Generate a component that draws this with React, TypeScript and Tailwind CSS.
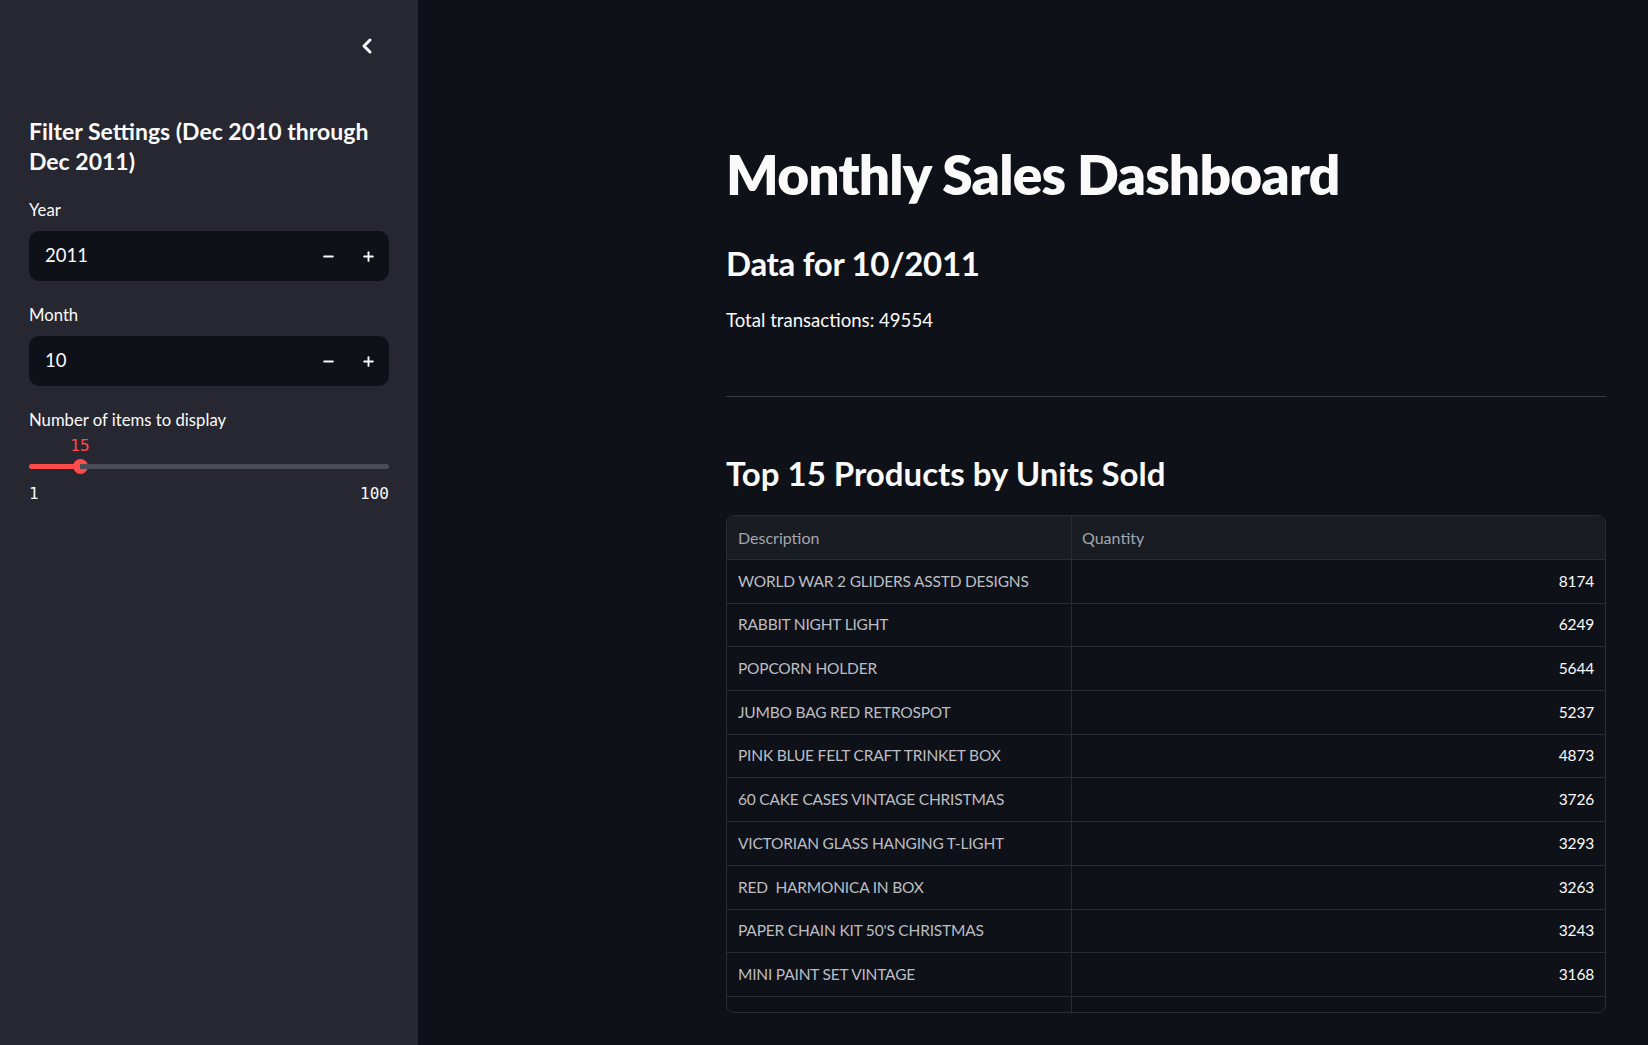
import React from 'react';
import { ChevronLeft, Minus, Plus } from 'lucide-react';

const products: { description: string; quantity: number }[] = [
  { description: 'WORLD WAR 2 GLIDERS ASSTD DESIGNS', quantity: 8174 },
  { description: 'RABBIT NIGHT LIGHT', quantity: 6249 },
  { description: 'POPCORN HOLDER', quantity: 5644 },
  { description: 'JUMBO BAG RED RETROSPOT', quantity: 5237 },
  { description: 'PINK BLUE FELT CRAFT TRINKET BOX', quantity: 4873 },
  { description: '60 CAKE CASES VINTAGE CHRISTMAS', quantity: 3726 },
  { description: 'VICTORIAN GLASS HANGING T-LIGHT', quantity: 3293 },
  { description: 'RED  HARMONICA IN BOX', quantity: 3263 },
  { description: "PAPER CHAIN KIT 50'S CHRISTMAS", quantity: 3243 },
  { description: 'MINI PAINT SET VINTAGE', quantity: 3168 },
];

const NumberInput: React.FC<{ label: string; value: string }> = ({ label, value }) => (
  <div>
    <div className="mt-[23px] h-[22px] text-[16.7px] leading-[22px] text-[#fafafa]">{label}</div>
    <div className="mt-[10px] flex h-[50px] items-center rounded-[10px] bg-[#0e1117] pl-[16px] pr-[1px]">
      <span className="flex-1 text-[18.5px] text-[#fafafa]">{value}</span>
      <button className="flex h-[40px] w-[40px] items-center justify-center text-[#fafafa]">
        <Minus size={15} strokeWidth={3} />
      </button>
      <button className="flex h-[40px] w-[40px] items-center justify-center text-[#fafafa]">
        <Plus size={15} strokeWidth={3} />
      </button>
    </div>
  </div>
);

const Slider: React.FC<{ label: string; value: number; min: number; max: number }> = ({ label, value, min, max }) => {
  const pct = (value - min) / (max - min);
  // thumb centre along the 360px track
  const filled = Math.round(pct * 360);
  return (
    <div>
      <div className="mt-[23px] h-[22px] text-[16.7px] leading-[22px] text-[#fafafa]">{label}</div>
      <div className="mt-[5px] h-[20px] font-['DejaVu_Sans_Mono',monospace] text-[16px] leading-[20px] text-[#ff4b4b]">
        <span className="inline-block w-[40px] text-center" style={{ marginLeft: filled - 20 }}>
          {value}
        </span>
      </div>
      <div className="mt-[3px] flex h-[15px] items-center">
        <div className="h-[5px] rounded-l-full bg-[#ff4b4b]" style={{ width: filled }} />
        <div className="-mx-[7.5px] h-[15px] w-[15px] shrink-0 rounded-full bg-[#ff4b4b]" />
        <div className="h-[5px] flex-1 rounded-r-full bg-[#4a4c56]" />
      </div>
      <div className="mt-[10px] flex justify-between font-['DejaVu_Sans_Mono',monospace] text-[16px] leading-[20px] text-[#fafafa]">
        <span>{min}</span>
        <span>{max}</span>
      </div>
    </div>
  );
};

const App: React.FC = () => {
  return (
    <div className="flex h-[1045px] w-[1648px] overflow-hidden font-['Lato','Noto_Sans',sans-serif] text-[#fafafa]">
      <aside className="flex w-[418px] shrink-0 flex-col bg-[#262730] px-[29px]">
        <div className="mt-[34px] flex h-[22px] justify-end pr-[10px]">
          <ChevronLeft size={24} strokeWidth={3} className="text-[#fafafa]" />
        </div>
        <h2 className="mt-[60px] text-[23px] font-bold leading-[30px] text-[#fafafa]">
          Filter Settings (Dec 2010 through Dec 2011)
        </h2>
        <NumberInput label="Year" value="2011" />
        <NumberInput label="Month" value="10" />
        <Slider label="Number of items to display" value={15} min={1} max={100} />
      </aside>

      <main className="flex-1 bg-[#0e1117] pl-[308px]">
        <div className="w-[880px]">
          <h1 className="mt-[141px] text-[55px] font-extrabold leading-[66px] tracking-[-0.8px]">Monthly Sales Dashboard</h1>
          <h3 className="mt-[35px] text-[33px] font-bold leading-[42px] tracking-[-0.3px]">Data for 10/2011</h3>
          <p className="mt-[21px] text-[18.6px] leading-[30px]">Total transactions: 49554</p>
          <hr className="mt-[61px] border-t border-[#393b41]" />
          <h3 className="mt-[55px] text-[33px] font-bold leading-[42px]">Top 15 Products by Units Sold</h3>

          <div className="mt-[21px] h-[498px] overflow-hidden rounded-[8px] border border-[#2a2c33] text-[15.5px] tracking-[-0.2px]">
            <div className="grid h-[44px] grid-cols-[345px_1fr] border-b border-[#2a2c33] bg-[#1a1c24] text-[16px] tracking-normal text-[#a3a6ae]">
              <div className="flex items-center border-r border-[#2a2c33] pl-[11px]">Description</div>
              <div className="flex items-center pl-[10px]">Quantity</div>
            </div>
            {products.map((p) => (
              <div key={p.description} className="grid h-[43.7px] grid-cols-[345px_1fr] border-b border-[#2a2c33]">
                <div className="flex items-center whitespace-pre border-r border-[#2a2c33] pl-[11px] text-[#bcbec4]">
                  {p.description}
                </div>
                <div className="flex items-center justify-end pr-[11px] text-[#fafafa]">{p.quantity}</div>
              </div>
            ))}
            <div className="grid h-[44px] grid-cols-[345px_1fr]">
              <div className="border-r border-[#2a2c33]" />
              <div />
            </div>
          </div>
        </div>
      </main>
    </div>
  );
};

export default App;
